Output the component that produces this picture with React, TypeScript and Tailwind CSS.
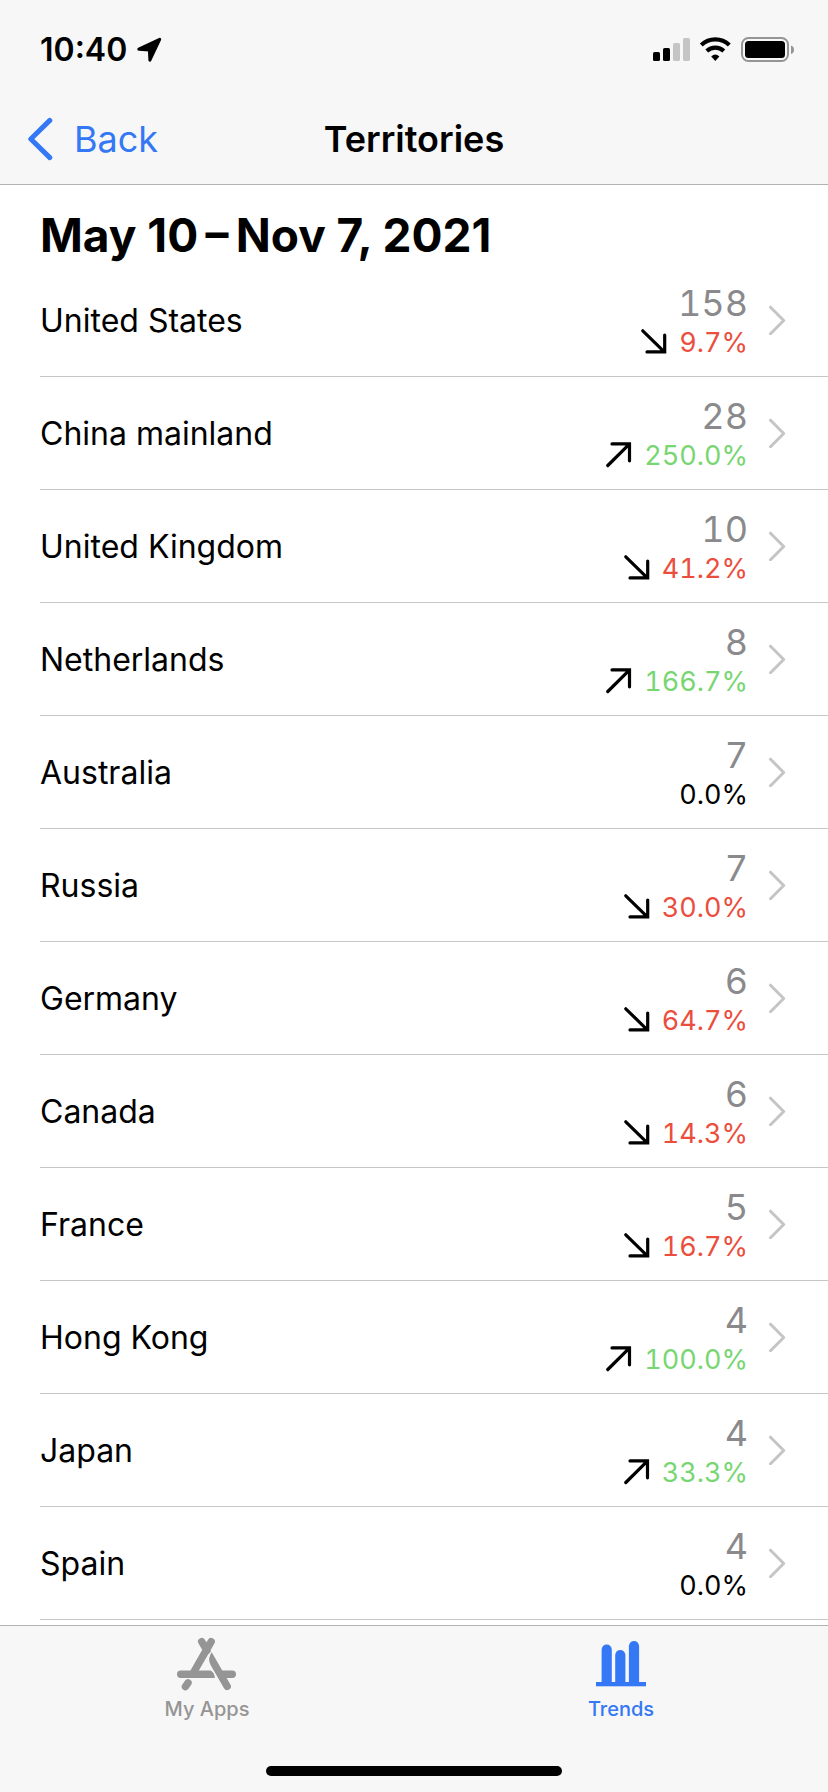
// App.tsx
import type { ReactNode } from "react";

type Trend = "up" | "down" | "flat";

interface Territory {
  name: string;
  value: number;
  change: string;
  trend: Trend;
}

const territories: Territory[] = [
  { name: "United States", value: 158, change: "9.7%", trend: "down" },
  { name: "China mainland", value: 28, change: "250.0%", trend: "up" },
  { name: "United Kingdom", value: 10, change: "41.2%", trend: "down" },
  { name: "Netherlands", value: 8, change: "166.7%", trend: "up" },
  { name: "Australia", value: 7, change: "0.0%", trend: "flat" },
  { name: "Russia", value: 7, change: "30.0%", trend: "down" },
  { name: "Germany", value: 6, change: "64.7%", trend: "down" },
  { name: "Canada", value: 6, change: "14.3%", trend: "down" },
  { name: "France", value: 5, change: "16.7%", trend: "down" },
  { name: "Hong Kong", value: 4, change: "100.0%", trend: "up" },
  { name: "Japan", value: 4, change: "33.3%", trend: "up" },
  { name: "Spain", value: 4, change: "0.0%", trend: "flat" },
];

const changeColor: Record<Trend, string> = {
  up: "text-[#78d672]",
  down: "text-[#eb4e3d]",
  flat: "text-black",
};

const TrendArrow = ({ trend }: { trend: Trend }) => {
  if (trend === "flat") return null;
  return (
    <svg width="26" height="28" viewBox="0 0 26 28" fill="none" stroke="black" strokeWidth="3.2" strokeLinecap="round" aria-hidden="true">
      {trend === "down" ? (
        <path d="M1.8 1.8 L23.3 22.8 M23.7 6 V22.9 H6" />
      ) : (
        <path d="M1.8 23.5 L23.3 2.2 M6 1.9 H23.5 V18.8" />
      )}
    </svg>
  );
};

const StatusBar = () => (
  <div className="flex h-24 items-center justify-between pt-1 pl-10 pr-[34px]">
    <div className="flex items-center gap-[10px]">
      <span className="text-[32px] leading-8 font-semibold">10:40</span>
      <svg width="25" height="26" viewBox="0 0 25 26" stroke="black" strokeWidth="3" strokeLinejoin="round" aria-hidden="true">
        <path d="M1.8 12.2 L22.7 2.4 L12.9 23.2 L12.4 12.9 Z" />
      </svg>
    </div>
    <div className="flex items-center gap-[9px]">
      <svg width="37" height="26" viewBox="0 0 37 26" aria-hidden="true">
        <rect x="0" y="15" width="7" height="9" rx="1.6" />
        <rect x="10" y="11" width="7" height="13" rx="1.6" />
        <rect x="20" y="6" width="7" height="18" rx="1.6" fill="#c5c5c5" />
        <rect x="30" y="1" width="7" height="23" rx="1.6" fill="#c5c5c5" />
      </svg>
      <svg width="33" height="26" viewBox="0 0 33 26" fill="none" stroke="black" strokeWidth="4.2" aria-hidden="true">
        <path d="M2.3 8 A20.5 20.5 0 0 1 30.3 8" />
        <path d="M7.8 14 A12.4 12.4 0 0 1 24.8 14" />
        <path d="M16.3 23.9 L12.2 19.6 Q16.3 15.4 20.4 19.6 Z" fill="black" stroke="none" />
      </svg>
      <svg width="53" height="26" viewBox="0 0 53 26" aria-hidden="true">
        <rect x="1" y="1" width="46" height="23" rx="6.5" fill="none" stroke="#959595" strokeWidth="2" />
        <rect x="4" y="4" width="40" height="17" rx="3.5" />
        <path d="M50 8.5 Q53 9.5 53 12.7 Q53 16 50 17 Z" fill="#959595" />
      </svg>
    </div>
  </div>
);

const NavBar = () => (
  <div className="grid h-[88px] grid-cols-[1fr_auto_1fr] items-center px-7 pb-0.5">
    <button type="button" className="flex items-center gap-5 text-[36px] leading-[44px] text-[#3478f6]">
      <svg width="26" height="46" viewBox="0 0 26 46" fill="none" stroke="currentColor" strokeWidth="5" strokeLinecap="round" strokeLinejoin="round" aria-hidden="true">
        <path d="M21.8 4.4 L2.8 23 L21.8 41.6" />
      </svg>
      Back
    </button>
    <h1 className="text-[36px] leading-[44px] font-semibold">Territories</h1>
  </div>
);

const TerritoryRow = ({ item }: { item: Territory }) => (
  <li className="border-b border-[#c6c6c8]">
    <a href="#" className="flex items-center py-4 pr-[42px]">
      <span className="flex-1 pt-0.5 text-[32px] leading-10">{item.name}</span>
      <span className="flex flex-col items-end tabular-nums">
        <span className="text-[36px] leading-[46px] text-[#8a8a8d]">{item.value}</span>
        <span className={`flex items-center gap-3 text-[27px] leading-[34px] ${changeColor[item.trend]}`}>
          <TrendArrow trend={item.trend} />
          {item.change}
        </span>
      </span>
      <svg className="ml-5" width="18" height="30" viewBox="0 0 18 30" fill="none" stroke="#c5c5c7" strokeWidth="3" strokeLinecap="round" strokeLinejoin="round" aria-hidden="true">
        <path d="M2.5 2.2 L15.7 15.5 L2.5 28.8" />
      </svg>
    </a>
  </li>
);

const AppsIcon = () => (
  <svg width="64" height="64" viewBox="0 0 64 64" fill="none" stroke="currentColor" strokeWidth="7.4" strokeLinecap="round" aria-hidden="true">
    <path d="M36.2 7.7 L18.5 38.5 M26.7 7.7 L32 16.5" />
    <path d="M13 48.8 L10.4 52.6" />
    <path d="M47.5 40.3 H57.3" />
    <path
      d="M5.7 36.6 H35.5 Q39.5 38.5 39.9 44 H5.7 A3.7 3.7 0 0 1 5.7 36.6 Z M36.7 18.3 L55.4 50.4 A3.7 3.7 0 0 1 49 54.2 L35.6 31 Q32.3 24.5 36.7 18.3 Z"
      fill="currentColor"
      stroke="none"
    />
  </svg>
);

const TrendsIcon = () => (
  <svg width="64" height="64" viewBox="0 0 64 64" fill="currentColor" aria-hidden="true">
    <path d="M12.6 50 V15.7 A5.1 5.1 0 0 1 22.8 15.7 V50 Z" />
    <path d="M26.2 50 V21 A5.1 5.1 0 0 1 36.4 21 V50 Z" />
    <path d="M39.9 50 V12 A5.1 5.1 0 0 1 50.1 12 V50 Z" />
    <rect x="7" y="48" width="50" height="4.3" />
  </svg>
);

const Tab = ({ label, active, children }: { label: string; active?: boolean; children: ReactNode }) => (
  <button
    type="button"
    aria-current={active ? "page" : undefined}
    className={`flex flex-1 flex-col items-center text-[20px] leading-[22px] font-medium ${active ? "text-[#3478f6]" : "text-[#959595]"}`}
  >
    {children}
    {label}
  </button>
);

const App = () => {
  return (
    <div className="flex min-h-screen flex-col bg-white font-['Inter',sans-serif] text-black">
      {/* TOP */}
      <header className="border-b border-[#b2b2b2] bg-[#f7f7f7]">
        <StatusBar />
        <NavBar />
      </header>

      {/* LIST */}
      <main className="flex-1 pl-10">
        <h2 className="pt-[22px] text-[46px] leading-[57px] font-bold">May 10{"\u2009"}–{"\u2009"}Nov 7, 2021</h2>
        <ul>
          {territories.map((item) => (
            <TerritoryRow key={item.name} item={item} />
          ))}
        </ul>
      </main>

      {/* TABS */}
      <footer className="border-t border-[#b2b2b2] bg-[#f7f7f7] pb-4">
        <nav className="flex pt-2">
          <Tab label="My Apps">
            <AppsIcon />
          </Tab>
          <Tab label="Trends" active>
            <TrendsIcon />
          </Tab>
        </nav>
        <div className="mx-auto mt-[46px] h-[10px] w-[296px] rounded-full bg-black" />
      </footer>
    </div>
  );
};

export default App;
